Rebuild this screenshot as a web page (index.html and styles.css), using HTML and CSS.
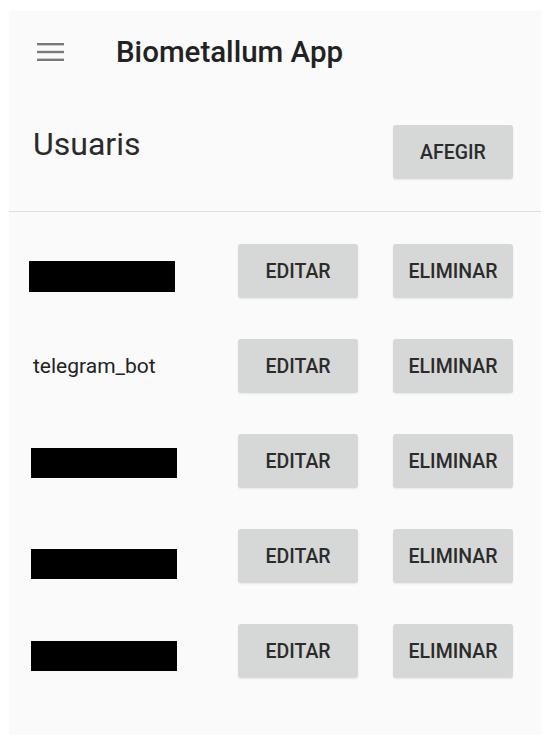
FILE: index.html
```html
<!DOCTYPE html>
<html lang="ca">
<head>
  <meta charset="UTF-8" />
  <meta name="viewport" content="width=device-width, initial-scale=1" />
  <title>Biometallum App</title>
  <link rel="stylesheet" href="styles.css">
</head>
<body>
  <div class="screen">
    <header class="toolbar">
      <span class="menu-icon" aria-label="Menu">
        <svg width="27" height="18" viewBox="0 0 27 18">
          <rect x="0" y="0" width="27" height="2.4" fill="#7a7a7a" />
          <rect x="0" y="7.8" width="27" height="2.4" fill="#7a7a7a" />
          <rect x="0" y="15.6" width="27" height="2.4" fill="#7a7a7a" />
        </svg>
      </span>
      <h1>Biometallum App</h1>
    </header>

    <div class="section-head">
      <h2>Usuaris</h2>
      <button class="btn">AFEGIR</button>
    </div>

    <ul class="user-list">
      <li class="user-row">
        <span class="redacted first"></span>
        <button class="btn">EDITAR</button>
        <button class="btn">ELIMINAR</button>
      </li>
      <li class="user-row">
        <span class="username">telegram_bot</span>
        <button class="btn">EDITAR</button>
        <button class="btn">ELIMINAR</button>
      </li>
      <li class="user-row">
        <span class="redacted high"></span>
        <button class="btn">EDITAR</button>
        <button class="btn">ELIMINAR</button>
      </li>
      <li class="user-row">
        <span class="redacted low"></span>
        <button class="btn">EDITAR</button>
        <button class="btn">ELIMINAR</button>
      </li>
      <li class="user-row">
        <span class="redacted"></span>
        <button class="btn">EDITAR</button>
        <button class="btn">ELIMINAR</button>
      </li>
    </ul>
  </div>
</body>
</html>
```

FILE: styles.css
```css
body {
  margin: 0;
  padding: 11px 9px 12px;
  background: #fff;
  font-family: Roboto, "Noto Sans", Arial, sans-serif;
  color: #222;
}
.screen {
  background: #fafafa;
  height: 724px;
}
.toolbar {
  display: flex;
  align-items: center;
  height: 82px;
  padding-left: 28px;
}
.menu-icon {
  display: flex;
  width: 27px;
  height: 18px;
}
.toolbar h1 {
  margin: 0 0 0 52px;
  font-size: 29.5px;
  font-weight: 500;
  color: #222;
}
.section-head {
  display: flex;
  justify-content: space-between;
  align-items: flex-start;
  height: 119px;
  padding: 32px 28px 0 24px;
  box-sizing: border-box;
  border-bottom: 1px solid #dedede;
}
.section-head h2 {
  margin: 0;
  font-size: 32px;
  font-weight: 400;
  line-height: 38px;
  color: #2a2a2a;
}
.btn {
  width: 120px;
  height: 54px;
  border: none;
  border-radius: 3px;
  background: #d6d7d7;
  box-shadow: 0 1px 2px rgba(0, 0, 0, 0.08);
  font-family: inherit;
  font-size: 19.5px;
  font-weight: 500;
  color: #2b2b2b;
  padding: 0;
}
.user-list {
  list-style: none;
  margin: 0;
  padding: 32px 28px 0 20px;
  display: flex;
  flex-direction: column;
  gap: 41px;
}
.user-row {
  display: flex;
  align-items: center;
  gap: 35px;
  height: 54px;
}
.user-row .btn:first-of-type {
  margin-left: auto;
}
.username {
  padding-left: 4px;
  font-size: 21px;
  color: #222;
}
.redacted {
  display: block;
  width: 146px;
  height: 30px;
  margin-top: 10px;
  margin-left: 2px;
  background: #000;
}
.redacted.first {
  height: 31px;
  margin-left: 0;
}
.redacted.high {
  margin-top: 4px;
}
.redacted.low {
  margin-top: 15px;
}
```
